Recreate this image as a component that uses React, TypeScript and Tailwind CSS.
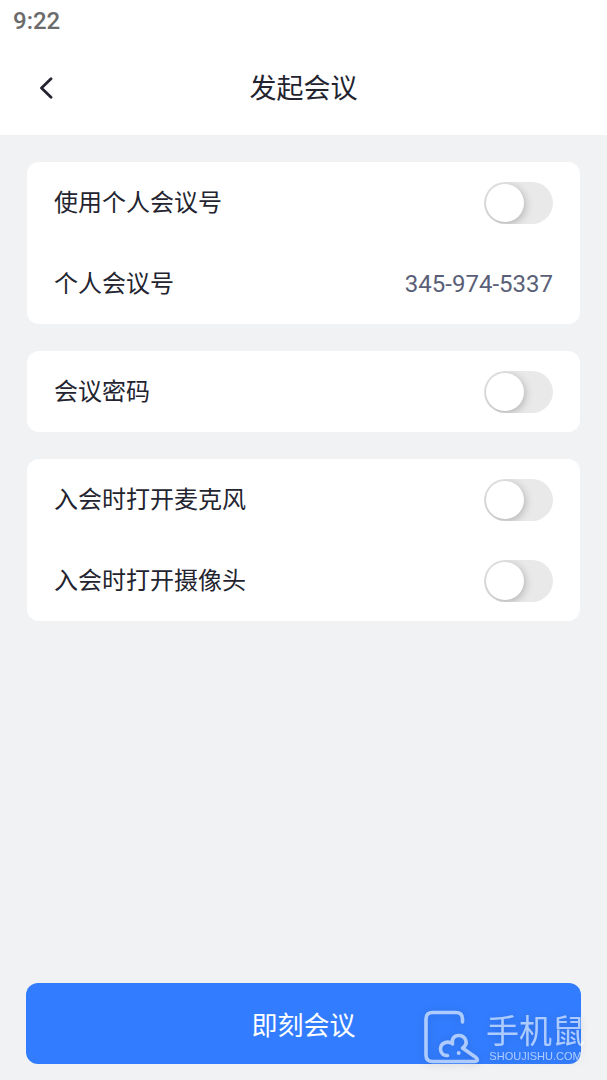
import { useState } from "react";
import type { ReactNode } from "react";

function Card({ children }: { children: ReactNode }) {
  return <section className="rounded-xl bg-white px-[27px]">{children}</section>;
}

function SwitchRow({ id, label }: { id: string; label: string }) {
  const [on, setOn] = useState(false);

  return (
    <div className="flex h-[81px] items-center justify-between">
      <label htmlFor={id} className="text-2xl">
        {label}
      </label>
      <input
        id={id}
        type="checkbox"
        role="switch"
        checked={on}
        onChange={(e) => setOn(e.target.checked)}
        className="flex h-[42px] w-[69px] shrink-0 cursor-pointer appearance-none items-center overflow-hidden rounded-full bg-[#e9e9e9] px-0.5 transition-colors before:size-[38px] before:rounded-full before:bg-white before:shadow-[1px_2px_8px_rgba(0,0,0,0.25)] before:transition-transform before:content-[''] checked:bg-[#327dff] checked:before:translate-x-[27px]"
      />
    </div>
  );
}

function Watermark() {
  return (
    <div className="pointer-events-none flex items-end gap-1.5 whitespace-nowrap text-white opacity-60 drop-shadow-[0_1px_4px_rgba(0,0,0,0.25)]">
      <svg
        viewBox="0 0 56 54"
        className="h-[54px] w-14 shrink-0"
        fill="none"
        stroke="currentColor"
        strokeWidth="3.6"
        strokeLinecap="round"
        strokeLinejoin="round"
        aria-hidden="true"
      >
        <path d="M38.500 12V9Q38.500 2.500 32 2.500H8.500Q2 2.500 2 9V45Q2 51.500 8.500 51.500H51Q55.500 50.500 52 47.500L38.500 38C45 34 42 25.500 34.500 25.500C30 25.500 27.500 29 28.500 34C24 30 16.500 33 16.500 39C16.500 43 19.500 46 23.500 45.500" />
        <circle cx="34.700" cy="43" r="2" fill="currentColor" stroke="none" />
      </svg>
      <div className="flex flex-col items-center">
        <span className="font-['Noto_Sans_CJK_SC',sans-serif] text-[33px] leading-[38px]">手机鼠</span>
        <span className="font-['Liberation_Sans',sans-serif] text-[11px] leading-4">SHOUJISHU.COM</span>
      </div>
    </div>
  );
}

export default function App() {
  return (
    <div className="flex min-h-screen flex-col bg-[#f1f2f4] font-[Roboto,'Noto_Sans_CJK_SC',sans-serif] text-[#23242f]">
      <header className="bg-white">
        <div className="px-[13px] pt-[5px] text-2xl leading-8 font-medium text-[#6b6b6b]">9:22</div>
        <div className="grid h-[98px] grid-cols-[64px_1fr_64px] items-center px-[14px] pt-1">
          <button type="button" aria-label="返回" className="flex size-16 cursor-pointer items-center justify-center">
            <svg
              viewBox="0 0 14 22"
              className="h-[22px] w-[14px]"
              fill="none"
              stroke="currentColor"
              strokeWidth="2.8"
              strokeLinecap="round"
              strokeLinejoin="round"
            >
              <path d="M12 1.800L2.500 11L12 20.200" />
            </svg>
          </button>
          <h1 className="pt-0.5 text-center text-[27px]">发起会议</h1>
        </div>
      </header>

      <main className="flex flex-1 flex-col gap-[27px] p-[27px]">
        <Card>
          <SwitchRow id="use-personal-id" label="使用个人会议号" />
          <div className="flex h-[81px] items-center justify-between text-2xl">
            <span>个人会议号</span>
            <span className="text-[#5a5f77]">345-974-5337</span>
          </div>
        </Card>
        <Card>
          <SwitchRow id="meeting-password" label="会议密码" />
        </Card>
        <Card>
          <SwitchRow id="open-mic" label="入会时打开麦克风" />
          <SwitchRow id="open-camera" label="入会时打开摄像头" />
        </Card>
      </main>

      <footer className="relative px-[26px] pb-4">
        <button
          type="button"
          className="h-[81px] w-full cursor-pointer rounded-xl bg-[#327dff] pt-1.5 text-[26px] text-white"
        >
          即刻会议
        </button>
        <div className="absolute right-[22px] bottom-4">
          <Watermark />
        </div>
      </footer>
    </div>
  );
}
